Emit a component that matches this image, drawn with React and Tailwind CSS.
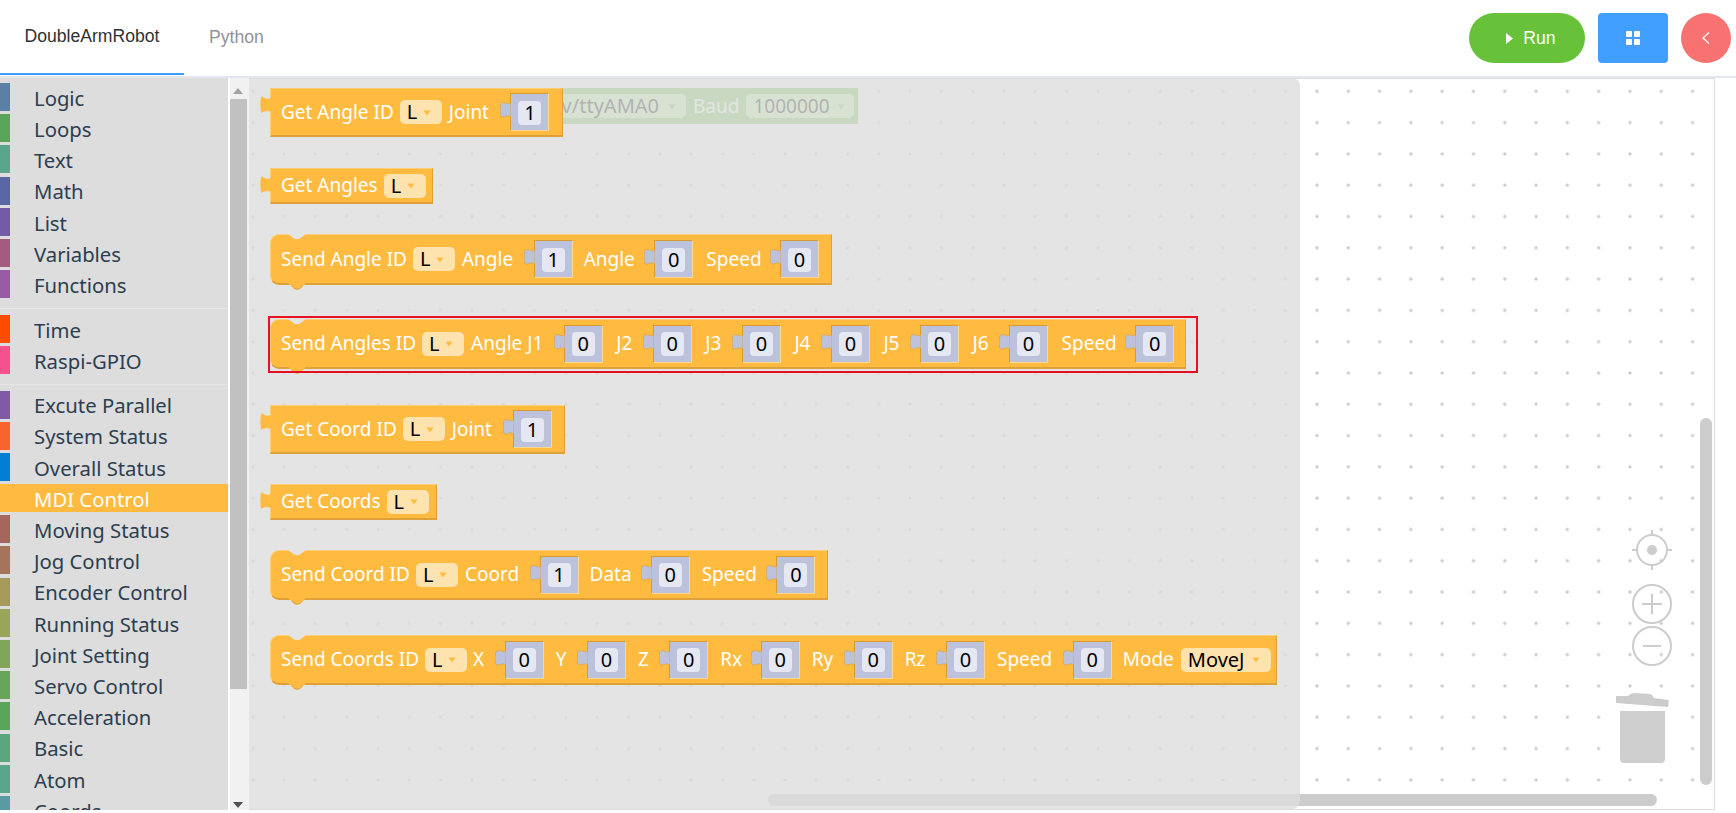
const font = { fontFamily: '"Noto Sans", sans-serif' };
const arial = { fontFamily: '"Liberation Sans", Arial, sans-serif' };

const groups = [
  [
    ['Logic', '#5b80a5'],
    ['Loops', '#5ba55b'],
    ['Text', '#5ba58c'],
    ['Math', '#5b67a5'],
    ['List', '#745ba5'],
    ['Variables', '#a55b80'],
    ['Functions', '#995ba5'],
  ],
  [
    ['Time', '#ff4d00'],
    ['Raspi-GPIO', '#f6518f'],
  ],
  [
    ['Excute Parallel', '#7f5ba6'],
    ['System Status', '#fb632d'],
    ['Overall Status', '#007fd4'],
    ['MDI Control', '#ffbb40'],
    ['Moving Status', '#a5675b'],
    ['Jog Control', '#a5745b'],
    ['Encoder Control', '#a5995b'],
    ['Running Status', '#99a55b'],
    ['Joint Setting', '#80a55b'],
    ['Servo Control', '#67a55b'],
    ['Acceleration', '#5ba55b'],
    ['Basic', '#5ba57f'],
    ['Atom', '#5ba58c'],
    ['Coords', '#5b99a5'],
  ],
];

function Sidebar() {
  return (
    <div className="w-[228px] h-full bg-[#dddddd] overflow-hidden pt-[5px] shrink-0">
      {groups.map((rows, i) => (
        <div key={i} className={i > 0 ? 'border-t border-[#e6e6e6] mt-[10px] pt-[5.6px]' : ''}>
          {rows.map(([name, color]) => {
            const active = name === 'MDI Control';
            return (
              <div
                key={name}
                className={`h-[28px] mb-[3.2px] flex items-center text-[20.3px] ${active ? 'bg-[#ffbb40] text-white' : 'text-[#2c3e50]'}`}
              >
                <span className="w-[10px] h-full shrink-0" style={{ backgroundColor: color }} />
                <span className="ml-[24px] mt-[2px] whitespace-nowrap">{name}</span>
              </div>
            );
          })}
        </div>
      ))}
    </div>
  );
}

function Text({ children, ml = 0 }) {
  return (
    <span className="text-white text-[19px] leading-none whitespace-nowrap" style={{ marginLeft: ml }}>
      {children}
    </span>
  );
}

function Drop({ value = 'L', w = 42, ml = 6 }) {
  return (
    <span
      className="h-[24px] rounded-[5px] bg-[#ffe3ae] flex items-center justify-between pl-[7px] pr-[11px] text-black text-[20px] leading-none"
      style={{ width: w, marginLeft: ml }}
    >
      {value}
      <svg width="8" height="6" viewBox="0 0 8 6" className="mt-[1px]">
        <path d="M0.5 0.5 H7.5 L4 5.5 Z" fill="#ffbb40" />
      </svg>
    </span>
  );
}

function Num({ value, w = 39, ml = 20.5 }) {
  return (
    <span className="relative flex" style={{ marginLeft: ml }}>
      <svg width="11" height="16" viewBox="0 0 11 16" className="absolute left-[-10px] top-[9px]">
        <path
          d="M11 1 C9 1.5 8 2 6.5 1.5 C4 0 1 0 0.5 3 C0 7 0 10 0.5 13 C1 15.5 4 15.5 6.5 14 C8 13.5 9 14 11 15 Z"
          fill="#bcc2db"
          stroke="#d99a2e"
          strokeWidth="0.6"
        />
      </svg>
      <span
        className="h-[38px] bg-[#bcc2db] border-t border-l border-t-[#d99a2e] border-l-[#d99a2e] border-b border-r border-b-[#ffd88f] border-r-[#ffd88f] flex items-center justify-center"
        style={{ width: w }}
      >
        <span className="w-[23px] h-[24px] rounded-[4px] bg-[#e5e8f2] text-black text-[20px] leading-none flex items-center justify-center mt-[1px]">
          {value}
        </span>
      </span>
    </span>
  );
}

function Block({ x, y, h, w, kind, children }) {
  const stack = kind === 'stack';
  return (
    <div
      className={`absolute bg-[#ffbb40] border-t border-t-[#ffcf77] border-b-2 border-b-[#dfa03a] border-r border-r-[#dfa03a] border-l border-l-[#ffcf77] flex items-center pl-[10px] ${stack ? 'rounded-l-[9px]' : ''}`}
      style={{ left: x, top: y, height: h, width: w }}
    >
      {kind === 'value' && (
        <svg width="12" height="18" viewBox="0 0 12 18" className="absolute left-[-11px] top-[7px]">
          <path d="M12 2 C8 3 5 3 3 1 L1.5 0 C0 4 0 13 1.5 17 C4 15 8 14 12 17 Z" fill="#ffbb40" />
        </svg>
      )}
      {stack && (
        <>
          <svg width="18" height="6" viewBox="0 0 18 6" className="absolute left-[17px] top-[-1px]">
            <path d="M0 0 H18 L12 4.5 Q9 6 6 4.5 Z" fill="#e4e4e4" />
          </svg>
          <svg width="18" height="7" viewBox="0 0 18 7" className="absolute left-[17px] bottom-[-7px]">
            <path d="M0 0 H18 L12 5.5 Q9 7 6 5.5 Z" fill="#ffbb40" />
            <path d="M4 2.5 L6 5.5 Q9 7 12 5.5 L15 2.5" fill="none" stroke="#dfa03a" strokeWidth="1" />
          </svg>
        </>
      )}
      {children}
    </div>
  );
}

function Workspace() {
  return (
    <div className="absolute left-0 top-0 right-0 bottom-0 bg-[radial-gradient(circle,#cccccc_1.3px,transparent_1.9px)] bg-[length:31.3px_31.3px] bg-[position:-11.75px_-3.35px]" />
  );
}

function Controls() {
  return (
    <svg width="70" height="240" viewBox="0 0 70 240" className="absolute left-[1611px] top-[450px]" fill="none" stroke="#cccccc">
      <g strokeWidth="2">
        <circle cx="41" cy="22" r="15" />
        <path d="M41 2v5M41 37v5M21 22h5M56 22h5" />
        <circle cx="41" cy="76" r="19" />
        <path d="M31 76h20M41 66v20" />
        <circle cx="41" cy="118" r="19" />
        <path d="M32 118h18" />
      </g>
      <circle cx="41" cy="22" r="5" fill="#cccccc" stroke="none" />
      <path d="M5 168 L17 168 Q20 165 24 165 L39 166 Q42 167 43 170 L58 172 L57 179 L5 175 Z" fill="#cccccc" stroke="none" />
      <path d="M9 183 H54 V231 Q54 235 50 235 H13 Q9 235 9 231 Z" fill="#cccccc" fillOpacity="0.95" stroke="none" />
    </svg>
  );
}

function GreenArrow() {
  return (
    <svg width="8" height="6" viewBox="0 0 8 6" className="mt-[1px]">
      <path d="M0.5 0.5 H7.5 L4 5.5 Z" fill="#78c850" />
    </svg>
  );
}

export default function App() {
  return (
    <div className="w-[1736px] h-[813px] bg-white overflow-hidden" style={font}>
      <header className="h-[78px] border-b-2 border-[#e4e7ed] flex items-start justify-between">
        <div className="flex h-[75px]" style={arial}>
          <div className="w-[184px] h-full border-b-[2px] border-[#409eff] text-[#303133] text-[17.6px] flex items-center justify-center">
            DoubleArmRobot
          </div>
          <div className="ml-[25px] h-full text-[#909399] text-[17.6px] flex items-center">Python</div>
        </div>
        <div className="flex items-center gap-[13px] pt-[13px] pr-[5px]">
          <button
            className="w-[116px] h-[50px] rounded-full bg-[#67c23a] text-white text-[17.6px] flex items-center justify-center gap-[10px] pl-[8px]"
            style={arial}
          >
            <svg width="7" height="11" viewBox="0 0 7 11">
              <path d="M0 0 L7 5.5 L0 11 Z" fill="currentColor" />
            </svg>
            Run
          </button>
          <button className="w-[70px] h-[50px] rounded-[4px] bg-[#409eff] text-white flex items-center justify-center">
            <svg width="14" height="14" viewBox="0 0 14 14" fill="currentColor">
              <rect width="6" height="6" rx="1" />
              <rect x="8" width="6" height="6" rx="1" />
              <rect y="8" width="6" height="6" rx="1" />
              <rect x="8" y="8" width="6" height="6" rx="1" />
            </svg>
          </button>
          <button className="w-[50px] h-[50px] rounded-full bg-[#f87272] text-white flex items-center justify-center">
            <svg width="8" height="12" viewBox="0 0 8 12" fill="none" stroke="currentColor" strokeWidth="1.3">
              <path d="M7 0.5 L1 6 L7 11.5" />
            </svg>
          </button>
        </div>
      </header>

      <div className="flex h-[732px] w-[1715px] relative">
        <Sidebar />
        <div className="w-[19px] h-full bg-[#f1f1f1] relative shrink-0 ml-[2px]">
          <span className="absolute left-[3px] top-[10px] border-x-[5px] border-x-transparent border-b-[6px] border-b-[#a3a3a3]" />
          <span className="absolute left-0 right-[2px] top-[21px] h-[590px] bg-[#c1c1c1]" />
          <span className="absolute left-[3px] bottom-[2px] border-x-[5px] border-x-transparent border-t-[6px] border-t-[#505050]" />
        </div>
        <div className="flex-1 relative border-t border-r border-b border-[#dddddd] overflow-hidden">
          <Workspace />
        </div>

        <div className="absolute inset-0 pointer-events-none">
          {/* green block behind the flyout */}
          <div className="absolute left-[500px] top-[10px] w-[358px] h-[36px] bg-[#78c850] flex items-center text-[20px] whitespace-nowrap">
            <span className="w-[186px] h-[24px] rounded-[5px] bg-[#c3f5aa] text-black flex items-center justify-end gap-[9px] pr-[10px]">
              v/ttyAMA0
              <GreenArrow />
            </span>
            <span className="ml-[7px] text-white text-[19px]">Baud</span>
            <span className="ml-[7px] w-[108px] h-[24px] rounded-[5px] bg-[#c3f5aa] text-black text-[19px] flex items-center justify-between pl-[7px] pr-[9px]">
              1000000
              <GreenArrow />
            </span>
          </div>
          {/* scrollbars */}
          <div className="absolute left-[768px] top-[716px] w-[889px] h-[12px] rounded-full bg-[#cccccc]" />
          <div className="absolute left-[1700px] top-[340px] w-[12px] h-[367px] rounded-full bg-[#cccccc]" />
          <Controls />
          {/* flyout */}
          <div className="absolute left-[249px] top-0 w-[1051px] h-[731px] rounded-r-[8px] bg-[#dddddd]/80" />

          <Block kind="value" x={270} y={10} w={293} h={49}>
            <Text>Get Angle ID</Text>
            <Drop />
            <Text ml={7}>Joint</Text>
            <Num value="1" ml={21.5} />
          </Block>
          <Block kind="value" x={270} y={90} w={163} h={36}>
            <Text>Get Angles</Text>
            <Drop />
          </Block>
          <Block kind="stack" x={270} y={156} w={562} h={51}>
            <Text>Send Angle ID</Text>
            <Drop />
            <Text ml={7}>Angle</Text>
            <Num value="1" />
            <Text ml={11}>Angle</Text>
            <Num value="0" ml={19.5} />
            <Text ml={13}>Speed</Text>
            <Num value="0" ml={18.5} />
          </Block>
          <Block kind="stack" x={270} y={241} w={916} h={50}>
            <Text>Send Angles ID</Text>
            <Drop />
            <Text ml={7}>Angle J1</Text>
            <Num value="0" />
            <Text ml={13.5}>J2</Text>
            <Num value="0" />
            <Text ml={13.5}>J3</Text>
            <Num value="0" />
            <Text ml={13.5}>J4</Text>
            <Num value="0" />
            <Text ml={13.5}>J5</Text>
            <Num value="0" />
            <Text ml={13.5}>J6</Text>
            <Num value="0" />
            <Text ml={13.5}>Speed</Text>
            <Num value="0" ml={18.5} />
          </Block>
          <div className="absolute left-[268px] top-[238px] w-[930px] h-[57px] border-2 border-[#e81123]" />
          <Block kind="value" x={270} y={327} w={295} h={49}>
            <Text>Get Coord ID</Text>
            <Drop />
            <Text ml={7}>Joint</Text>
            <Num value="1" ml={21} />
          </Block>
          <Block kind="value" x={270} y={406} w={167} h={36}>
            <Text>Get Coords</Text>
            <Drop />
          </Block>
          <Block kind="stack" x={270} y={472} w={558} h={50}>
            <Text>Send Coord ID</Text>
            <Drop />
            <Text ml={7}>Coord</Text>
            <Num value="1" />
            <Text ml={11}>Data</Text>
            <Num value="0" ml={19} />
            <Text ml={12}>Speed</Text>
            <Num value="0" ml={19.5} />
          </Block>
          <Block kind="stack" x={270} y={557} w={1007} h={50}>
            <Text>Send Coords ID</Text>
            <Drop />
            <Text ml={6}>X</Text>
            <Num value="0" />
            <Text ml={12}>Y</Text>
            <Num value="0" />
            <Text ml={12}>Z</Text>
            <Num value="0" />
            <Text ml={12}>Rx</Text>
            <Num value="0" ml={18.5} />
            <Text ml={12}>Ry</Text>
            <Num value="0" />
            <Text ml={12}>Rz</Text>
            <Num value="0" />
            <Text ml={12}>Speed</Text>
            <Num value="0" />
            <Text ml={11}>Mode</Text>
            <Drop value="MoveJ" w={90} ml={7} />
          </Block>
        </div>
      </div>
    </div>
  );
}
